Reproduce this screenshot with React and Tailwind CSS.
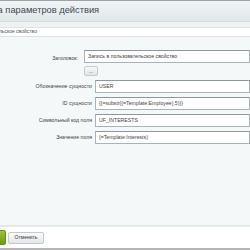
import React from "react";

const rows = [
    { label: "Обозначение сущности", value: "USER" },
    { label: "ID сущности", value: "{{=substr({=Template:Employee},5)}}" },
    { label: "Символьный код поля", value: "UF_INTERESTS" },
    { label: "Значение поля", value: "{=Template:Interests}" },
];

const App = () => {
    return (
        <div className="w-[250px] h-[250px] overflow-hidden bg-white flex flex-col" style={{ fontFamily: '"Liberation Sans", Arial, sans-serif' }}>
            <div className="h-[22px] shrink-0 border-t border-[#9aa5ab] bg-gradient-to-b from-[#f1f4f5] to-[#e1e8ea] border-b border-b-[#d3dcdf] flex items-center overflow-hidden">
                <span className="ml-[-43px] whitespace-nowrap text-[9.3px] text-[#3d4a52]">Настройка параметров действия</span>
            </div>
            <div className="flex-1 flex flex-col bg-[#f5f8f9]">
                <div className="h-[5px] bg-[#eef2f3]"></div>
                <div className="h-[10px] bg-white border-y border-[#dde3e5] flex items-center overflow-hidden">
                    <span className="ml-[-49px] whitespace-nowrap text-[5px] text-[#555]">Запись в пользовательское свойство</span>
                </div>
                <div className="pt-[13px] flex flex-col gap-[4px] text-[5.2px] text-[#444]">
                    <div className="flex">
                        <div className="w-[84px] text-right pt-[5px] pr-[6px]">Заголовок:</div>
                        <div className="flex-1 flex flex-col gap-[3px]">
                            <div className="h-[13px] bg-white border border-[#a9b3b8] border-t-[#8d979c] flex items-center px-[3px] whitespace-nowrap overflow-hidden">Запись в пользовательское свойство</div>
                            <div className="w-[14px] h-[10px] rounded-[2px] border border-[#c4cccf] bg-gradient-to-b from-[#f8f9f9] to-[#dfe5e7] flex items-center justify-center text-[5px] leading-none">...</div>
                        </div>
                    </div>
                    {rows.map((row) => (
                        <div key={row.label} className="flex items-center">
                            <div className="w-[95px] text-right pr-[3px] whitespace-nowrap">{row.label}</div>
                            <div className="flex-1 h-[13px] bg-white border border-[#a9b3b8] border-t-[#8d979c] flex items-center px-[3px] whitespace-nowrap overflow-hidden">{row.value}</div>
                        </div>
                    ))}
                </div>
            </div>
            <div className="h-[25px] shrink-0 border-t-[2px] border-[#e3e8ea] bg-white flex items-center gap-[2px] border-b-[2px] border-b-[#b5b5b5]">
                <div className="ml-[-20px] w-[26px] h-[15px] rounded-[2px] bg-gradient-to-b from-[#9bc33a] to-[#6f9a1b] border border-[#6a8f1c]"></div>
                <div className="w-[36px] h-[12px] rounded-[2px] border border-[#c3cacd] bg-gradient-to-b from-[#fbfcfc] to-[#e2e7e9] flex items-center justify-center text-[5px] text-[#333]">Отменить</div>
            </div>
        </div>
    );
};

export default App;
